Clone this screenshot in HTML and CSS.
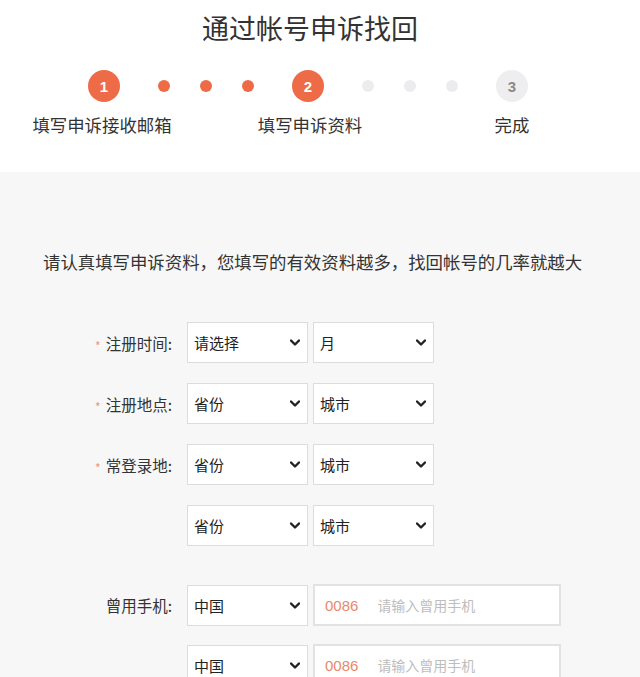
FILE: index.html
```html
<!DOCTYPE html>
<html lang="zh-CN">
<head>
<meta charset="utf-8">
<title>通过帐号申诉找回</title>
<link rel="stylesheet" href="styles.css">
</head>
<body>
<header class="head">
  <h1 class="title">通过帐号申诉找回</h1>
  <div class="steps">
    <span class="circle done">1</span>
    <span class="dot done"></span>
    <span class="dot done"></span>
    <span class="dot done"></span>
    <span class="circle done">2</span>
    <span class="dot"></span>
    <span class="dot"></span>
    <span class="dot"></span>
    <span class="circle">3</span>
  </div>
  <div class="labels">
    <span>填写申诉接收邮箱</span>
    <span>填写申诉资料</span>
    <span>完成</span>
  </div>
</header>
<main class="panel">
  <p class="intro">请认真填写申诉资料，您填写的有效资料越多，找回帐号的几率就越大</p>
  <div class="form">
    <div class="row">
      <label class="lbl"><i class="req">*</i>注册时间:</label>
      <div class="sel"><span>请选择</span><svg class="chev" viewBox="0 0 10 6"><path d="M1 1l4 4 4-4"/></svg></div>
      <div class="sel"><span>月</span><svg class="chev" viewBox="0 0 10 6"><path d="M1 1l4 4 4-4"/></svg></div>
    </div>
    <div class="row">
      <label class="lbl"><i class="req">*</i>注册地点:</label>
      <div class="sel"><span>省份</span><svg class="chev" viewBox="0 0 10 6"><path d="M1 1l4 4 4-4"/></svg></div>
      <div class="sel"><span>城市</span><svg class="chev" viewBox="0 0 10 6"><path d="M1 1l4 4 4-4"/></svg></div>
    </div>
    <div class="row">
      <label class="lbl"><i class="req">*</i>常登录地:</label>
      <div class="sel"><span>省份</span><svg class="chev" viewBox="0 0 10 6"><path d="M1 1l4 4 4-4"/></svg></div>
      <div class="sel"><span>城市</span><svg class="chev" viewBox="0 0 10 6"><path d="M1 1l4 4 4-4"/></svg></div>
    </div>
    <div class="row">
      <label class="lbl"></label>
      <div class="sel"><span>省份</span><svg class="chev" viewBox="0 0 10 6"><path d="M1 1l4 4 4-4"/></svg></div>
      <div class="sel"><span>城市</span><svg class="chev" viewBox="0 0 10 6"><path d="M1 1l4 4 4-4"/></svg></div>
    </div>
    <div class="row phone first">
      <label class="lbl">曾用手机:</label>
      <div class="sel"><span>中国</span><svg class="chev" viewBox="0 0 10 6"><path d="M1 1l4 4 4-4"/></svg></div>
      <div class="inp"><span class="code">0086</span><span class="ph">请输入曾用手机</span></div>
    </div>
    <div class="row phone second">
      <label class="lbl"></label>
      <div class="sel"><span>中国</span><svg class="chev" viewBox="0 0 10 6"><path d="M1 1l4 4 4-4"/></svg></div>
      <div class="inp"><span class="code">0086</span><span class="ph">请输入曾用手机</span></div>
    </div>
  </div>
</main>
</body>
</html>
```
FILE: styles.css
```css
* { box-sizing: border-box; }
html, body { margin: 0; padding: 0; }
body {
  font-family: "Noto Sans CJK SC", "Noto Sans", "Liberation Sans", sans-serif;
  color: #333;
  background: #f7f7f7;
  overflow: hidden;
}
.head {
  background: #fff;
  height: 172px;
  padding-top: 10px;
}
.title {
  margin: 0;
  padding-right: 20px;
  font-size: 27px;
  font-weight: normal;
  line-height: 36px;
  text-align: center;
  color: #333;
}
.steps {
  display: flex;
  align-items: center;
  gap: 30px;
  padding-left: 80px;
  margin-top: 24px;
  height: 32px;
}
.circle {
  width: 32px;
  height: 32px;
  margin: 0 8px;
  border-radius: 50%;
  background: #eeeef0;
  color: #8a8a8a;
  font-family: "Liberation Sans", "Noto Sans", sans-serif;
  font-weight: bold;
  font-size: 15px;
  display: flex;
  align-items: center;
  justify-content: center;
}
.circle.done { background: #ee6b47; color: #fff; }
.dot {
  width: 12px;
  height: 12px;
  border-radius: 50%;
  background: #ececef;
}
.dot.done { background: #ee6b47; }
.labels {
  display: grid;
  grid-template-columns: 200px 216px 188px;
  padding-left: 2px;
  margin-top: 11px;
  font-size: 17.4px;
  line-height: 24px;
  text-align: center;
  color: #333;
}
.panel {
  padding-top: 77px;
}
.intro {
  margin: 0 0 0 43px;
  font-size: 17.4px;
  line-height: 26px;
  color: #333;
  white-space: nowrap;
}
.form {
  margin-top: 47px;
  display: flex;
  flex-direction: column;
  gap: 20px;
}
.row {
  display: flex;
  align-items: center;
  height: 41px;
}
.row.first { margin-top: 18px; }
.row.second { margin-top: -2px; }
.row.phone { height: 42px; }
.lbl {
  width: 172px;
  text-align: right;
  font-size: 15.5px;
  color: #333;
  margin-right: 15px;
}
.req {
  font-style: normal;
  color: #e8958a;
  font-size: 12px;
  margin-right: 5px;
  position: relative;
  top: 1px;
}
.sel {
  width: 121px;
  height: 41px;
  background: #fff;
  border: 1px solid #dcdcdc;
  display: flex;
  align-items: center;
  justify-content: space-between;
  padding: 0 7px 0 6px;
  font-size: 15px;
  color: #222;
  margin-right: 5px;
}
.chev {
  width: 10px;
  height: 7px;
  fill: none;
  stroke: #222;
  stroke-width: 2.4;
  stroke-linecap: round;
  stroke-linejoin: round;
}
.inp {
  width: 248px;
  height: 42px;
  background: #fff;
  border: 2px solid #e2e2e2;
  display: flex;
  align-items: center;
  padding-left: 10px;
  font-size: 14px;
}
.code {
  color: #e8896a;
  font-family: "Liberation Sans", "Noto Sans", sans-serif;
  font-size: 15px;
  margin-right: 19px;
}
.ph { color: #bdbdbd; }
```
